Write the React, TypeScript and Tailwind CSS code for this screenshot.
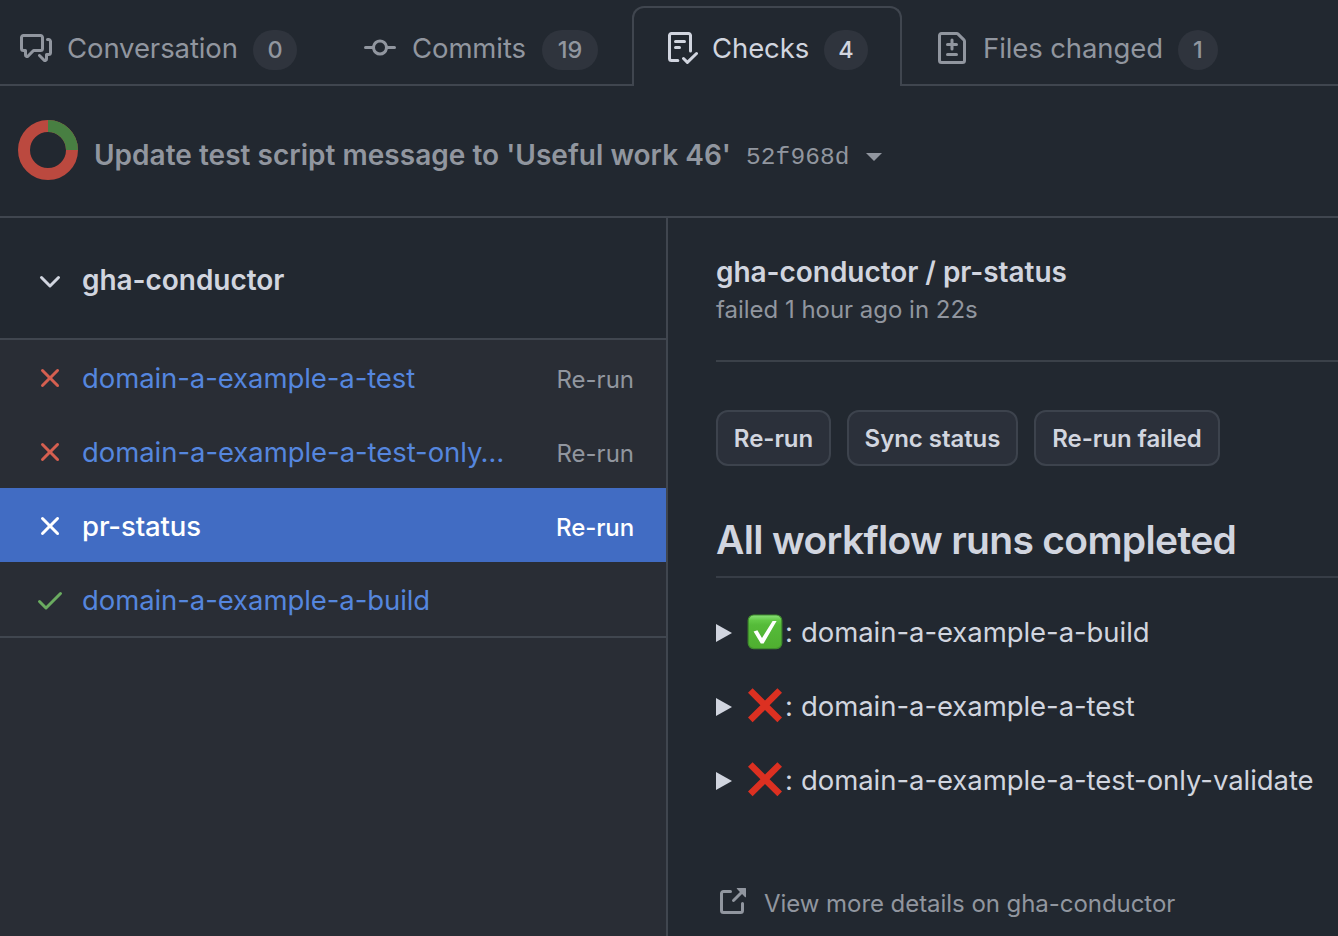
import React from "react";
import clsx from "clsx";

const icons = {
  discussion:
    "M1.75 1h8.5c.966 0 1.75.784 1.75 1.75v5.5A1.75 1.75 0 0 1 10.25 10H7.061l-2.574 2.573A1.458 1.458 0 0 1 2 11.543V10h-.25A1.75 1.75 0 0 1 0 8.25v-5.5C0 1.784.784 1 1.75 1ZM1.5 2.75v5.5c0 .138.112.25.25.25h1a.75.75 0 0 1 .75.75v2.19l2.72-2.72a.749.749 0 0 1 .53-.22h3.5a.25.25 0 0 0 .25-.25v-5.5a.25.25 0 0 0-.25-.25h-8.5a.25.25 0 0 0-.25.25Zm13 2a.25.25 0 0 0-.25-.25h-.5a.75.75 0 0 1 0-1.5h.5c.966 0 1.75.784 1.75 1.75v5.5A1.75 1.75 0 0 1 14.25 12H14v1.543a1.458 1.458 0 0 1-2.487 1.03L9.22 12.28a.749.749 0 0 1 .326-1.275.749.749 0 0 1 .734.215l2.22 2.22v-2.19a.75.75 0 0 1 .75-.75h1a.25.25 0 0 0 .25-.25Z",
  commit:
    "M11.93 8.5a4.002 4.002 0 0 1-7.86 0H.75a.75.75 0 0 1 0-1.5h3.32a4.002 4.002 0 0 1 7.86 0h3.32a.75.75 0 0 1 0 1.5Zm-1.43-.75a2.5 2.5 0 1 0-5 0 2.5 2.5 0 0 0 5 0Z",
  checklist:
    "M2.5 1.75v11.5c0 .138.112.25.25.25h3.17a.75.75 0 0 1 0 1.5H2.75A1.75 1.75 0 0 1 1 13.25V1.75C1 .784 1.784 0 2.75 0h8.5C12.216 0 13 .784 13 1.75v7.736a.75.75 0 0 1-1.5 0V1.75a.25.25 0 0 0-.25-.25h-8.5a.25.25 0 0 0-.25.25Zm13.274 9.537v-.001l-4.557 4.45a.75.75 0 0 1-1.055-.008l-1.943-1.95a.75.75 0 0 1 1.062-1.058l1.419 1.425 4.026-3.932a.75.75 0 1 1 1.048 1.074ZM4.75 4h4.5a.75.75 0 0 1 0 1.5h-4.5a.75.75 0 0 1 0-1.5ZM4 7.75A.75.75 0 0 1 4.75 7h2a.75.75 0 0 1 0 1.5h-2A.75.75 0 0 1 4 7.75Z",
  fileDiff:
    "M1 1.75C1 .784 1.784 0 2.75 0h7.586c.464 0 .909.184 1.237.513l2.914 2.914c.329.328.513.773.513 1.237v9.586A1.75 1.75 0 0 1 13.25 16H2.75A1.75 1.75 0 0 1 1 14.25Zm1.75-.25a.25.25 0 0 0-.25.25v12.5c0 .138.112.25.25.25h10.5a.25.25 0 0 0 .25-.25V4.664a.25.25 0 0 0-.073-.177l-2.914-2.914a.25.25 0 0 0-.177-.073ZM8 3.25a.75.75 0 0 1 .75.75v1.5h1.5a.75.75 0 0 1 0 1.5h-1.5v1.5a.75.75 0 0 1-1.5 0V7h-1.5a.75.75 0 0 1 0-1.5h1.5V4A.75.75 0 0 1 8 3.25Zm-3 8a.75.75 0 0 1 .75-.75h4.5a.75.75 0 0 1 0 1.5h-4.5a.75.75 0 0 1-.75-.75Z",
  x: "M3.72 3.72a.75.75 0 0 1 1.06 0L8 6.94l3.22-3.22a.749.749 0 0 1 1.275.326.749.749 0 0 1-.215.734L9.06 8l3.22 3.22a.749.749 0 0 1-.326 1.275.749.749 0 0 1-.734-.215L8 9.06l-3.22 3.22a.751.751 0 0 1-1.042-.018.751.751 0 0 1-.018-1.042L6.94 8 3.72 4.78a.75.75 0 0 1 0-1.06Z",
  check:
    "M13.78 4.22a.75.75 0 0 1 0 1.06l-7.25 7.25a.75.75 0 0 1-1.06 0L2.22 9.28a.751.751 0 0 1 .018-1.042.751.751 0 0 1 1.042-.018L6 10.94l6.72-6.72a.75.75 0 0 1 1.06 0Z",
  chevron:
    "M12.78 5.22a.749.749 0 0 1 0 1.06l-4.25 4.25a.749.749 0 0 1-1.06 0L3.22 6.28a.749.749 0 1 1 1.06-1.06L8 8.939l3.72-3.719a.749.749 0 0 1 1.06 0Z",
  external:
    "M3.75 2h3.5a.75.75 0 0 1 0 1.5h-3.5a.25.25 0 0 0-.25.25v8.5c0 .138.112.25.25.25h8.5a.25.25 0 0 0 .25-.25v-3.5a.75.75 0 0 1 1.5 0v3.5A1.75 1.75 0 0 1 12.25 14h-8.5A1.75 1.75 0 0 1 2 12.25v-8.5C2 2.784 2.784 2 3.75 2Zm6.854-1h4.146a.25.25 0 0 1 .25.25v4.146a.25.25 0 0 1-.427.177L13.03 4.03 9.28 7.78a.751.751 0 0 1-1.042-.018.751.751 0 0 1-.018-1.042l3.75-3.75-1.543-1.543A.25.25 0 0 1 10.604 1Z",
};

function Icon({ name, className }: { name: keyof typeof icons; className?: string }) {
  return (
    <svg viewBox="0 0 16 16" className={clsx("size-8 shrink-0", className)} fill="currentColor">
      <path d={icons[name]} />
    </svg>
  );
}

interface TabProps {
  icon: keyof typeof icons;
  label: string;
  count: number;
  className: string;
  labelClass: string;
  countClass: string;
  active?: boolean;
}

function Tab({ icon, label, count, className, labelClass, countClass, active }: TabProps) {
  return (
    <a
      className={clsx(
        "flex shrink-0 items-center",
        active
          ? "mt-1.5 h-20 rounded-t-xl border-2 border-b-0 border-[#40464f] pt-0.5 text-[#d1d5df]"
          : "h-[86px] border-b-2 border-[#40464f] pt-3 text-[#91969f]",
        className,
      )}
    >
      <Icon name={icon} />
      <span
        className={clsx("shrink-0 text-[27.5px] leading-8 tracking-[-0.1px] whitespace-nowrap", labelClass)}
      >
        {label}
      </span>
      <span
        className={clsx(
          "mt-1 flex h-10 shrink-0 items-center justify-center rounded-full bg-[#2f343d] text-[23.5px] font-medium",
          countClass,
        )}
      >
        {count}
      </span>
    </a>
  );
}

const checks = [
  { name: "domain-a-example-a-test", state: "failed", tracking: "tracking-[-0.08px]" },
  { name: "domain-a-example-a-test-only…", state: "failed", tracking: "tracking-[-0.06px]" },
  { name: "pr-status", state: "selected", tracking: "tracking-[-0.1px]" },
  { name: "domain-a-example-a-build", state: "passed", tracking: "tracking-[-0.08px]" },
];

function CheckRow({ name, state, tracking }: { name: string; state: string; tracking: string }) {
  const selected = state === "selected";
  return (
    <li className={clsx("flex h-[74px] items-center pl-[34px] pr-8", selected && "bg-[#416cc3] text-white")}>
      <Icon
        name={state === "passed" ? "check" : "x"}
        className={clsx("mt-0.5", state === "failed" && "text-[#d55f50]", state === "passed" && "text-[#6aab60]")}
      />
      <span
        className={clsx(
          "ml-4 mt-0.5 grow text-[27.5px] leading-8",
          tracking,
          selected ? "font-medium text-white" : "text-[#5586de]",
        )}
      >
        {name}
      </span>
      {state !== "passed" && (
        <span className={clsx("mt-[5px] text-[24px]", selected ? "font-medium tracking-[-0.1px]" : "text-[#91969f]")}>
          Re-run
        </span>
      )}
    </li>
  );
}

function PassedMark() {
  return (
    <svg viewBox="0 0 36 36" className="size-9 shrink-0">
      <defs>
        <linearGradient id="passed" x1="0" y1="0" x2="0" y2="1">
          <stop offset="0" stopColor="#8be07a" />
          <stop offset="0.16" stopColor="#62c846" />
          <stop offset="0.3" stopColor="#55bb39" />
          <stop offset="1" stopColor="#4fae30" />
        </linearGradient>
      </defs>
      <rect x="1.2" y="1" width="33.6" height="33.6" rx="5.5" fill="url(#passed)" stroke="#3f8c2d" strokeWidth="1.2" />
      <path d="M6.6 17.4 L10.4 16.2 L15 24 L25.6 7 H29.6 L16.6 29.6 H13.8 Z" fill="#fff" />
    </svg>
  );
}

function FailedMark() {
  return (
    <svg viewBox="0 0 36 36" className="size-9 shrink-0">
      <path
        d="M5.6 0.2 L18 12.5 L30.4 0.2 L35 4.8 L22.6 17.2 L35 29.6 L30.4 34.2 L18 21.9 L5.6 34.2 L1 29.6 L13.4 17.2 L1 4.8 Z"
        fill="#dc3021"
      />
    </svg>
  );
}

function Run({ name, passed, tracking }: { name: string; passed?: boolean; tracking: string }) {
  return (
    <li className="flex h-[74px] items-center">
      <svg viewBox="0 0 16 18" className="mt-px h-[18px] w-4 shrink-0" fill="#d1d5df">
        <path d="M0 0 L16 9 L0 18 Z" />
      </svg>
      <span className="ml-[15px] -mt-px flex">{passed ? <PassedMark /> : <FailedMark />}</span>
      <span className="ml-[2px] w-4 text-[27.5px] leading-8">:</span>
      <span className={clsx("shrink-0 text-[27.5px] leading-8 whitespace-nowrap", tracking)}>{name}</span>
    </li>
  );
}

function Button({ children, className }: { children: React.ReactNode; className: string }) {
  return (
    <button
      className={clsx(
        "flex h-14 shrink-0 items-center justify-center rounded-xl border-2 border-[#3d434d] bg-[#2b303a] pt-0.5 text-[24px] leading-8 font-semibold tracking-[-0.05px] whitespace-nowrap",
        className,
      )}
    >
      {children}
    </button>
  );
}

export default function App() {
  return (
    <div className="flex h-[936px] w-[1338px] flex-col overflow-hidden bg-[#222830] font-['Inter',sans-serif] text-[#d1d5df]">
      <nav className="flex h-[86px] shrink-0">
        <Tab icon="discussion" label="Conversation" count={0} className="w-[330px] pl-5"
          labelClass="ml-[15px] w-[186px]" countClass="w-11" />
        <Tab icon="commit" label="Commits" count={19} className="w-[302px] pl-[34px]"
          labelClass="ml-4 w-[130px]" countClass="w-14" />
        <Tab icon="checklist" label="Checks" count={4} className="w-[270px] pl-8" active
          labelClass="ml-[14px] w-[112px]" countClass="w-11" />
        <Tab icon="fileDiff" label="Files changed" count={1} className="grow pl-[34px]"
          labelClass="ml-[15px] w-[195px]" countClass="w-10" />
      </nav>

      <header className="flex h-[132px] shrink-0 items-center border-b-2 border-[#40464f] pl-[18px] text-[#91969f]">
        <svg viewBox="0 0 60 60" className="-mt-0.5 size-[60px] shrink-0" fill="none" strokeWidth="12">
          <circle cx="30" cy="30" r="24" stroke="#bb493f" />
          <path d="M30 6 A24 24 0 0 1 54 30" stroke="#487f42" />
        </svg>
        <h1 className="ml-4 mt-2 w-[652px] text-[28px] leading-8 font-semibold tracking-[0.02px] whitespace-nowrap">
          Update test script message to 'Useful work 46'
        </h1>
        <span className="mt-[14px] w-[120px] font-['Liberation_Mono',monospace] text-[24.5px] tracking-[0.1px]">52f968d</span>
        <svg viewBox="0 0 16 8" className="mt-3 h-2 w-4" fill="currentColor">
          <path d="M0 0 H16 L8 8 Z" />
        </svg>
      </header>

      <div className="flex grow">
        <aside className="flex w-[668px] shrink-0 flex-col border-r-2 border-[#40464f] bg-[#292d35]">
          <div className="flex h-[122px] items-center border-b-2 border-[#40464f] bg-[#222830] pl-[34px]">
            <Icon name="chevron" className="mt-2" />
            <h2 className="ml-4 mt-1 text-[28px] leading-8 font-semibold tracking-[-0.05px]">gha-conductor</h2>
          </div>
          <ul className="border-b-2 border-[#40464f]">
            {checks.map((c) => (
              <CheckRow key={c.name} {...c} />
            ))}
          </ul>
        </aside>

        <main className="flex grow flex-col pl-12">
          <div className="flex h-36 shrink-0 flex-col border-b-2 border-[#3b4149] pt-[38px]">
            <h2 className="text-[28px] leading-8 font-semibold tracking-[-0.05px]">gha-conductor / pr-status</h2>
            <p className="mt-2 text-[24px] leading-7 tracking-[-0.02px] text-[#91969f]">failed 1 hour ago in 22s</p>
          </div>
          <div className="mt-12 flex gap-4">
            <Button className="w-[115px]">Re-run</Button>
            <Button className="w-[171px]">Sync status</Button>
            <Button className="w-[186px]">Re-run failed</Button>
          </div>
          <h1 className="mt-[50px] h-[62px] shrink-0 border-b-2 border-[#373d46] text-[39px] leading-[48px] font-semibold tracking-[-0.67px] whitespace-nowrap">
            All workflow runs completed
          </h1>
          <ul className="mt-[17px]">
            <Run name="domain-a-example-a-build" passed tracking="tracking-[-0.06px]" />
            <Run name="domain-a-example-a-test" tracking="tracking-[-0.06px]" />
            <Run name="domain-a-example-a-test-only-validate" tracking="tracking-[-0.06px]" />
          </ul>
          <a className="mt-[69px] flex h-8 items-center text-[#91969f]">
            <Icon name="external" />
            <span className="ml-4 mt-1 text-[24px] leading-7 tracking-[-0.05px]">View more details on gha-conductor</span>
          </a>
        </main>
      </div>
    </div>
  );
}
